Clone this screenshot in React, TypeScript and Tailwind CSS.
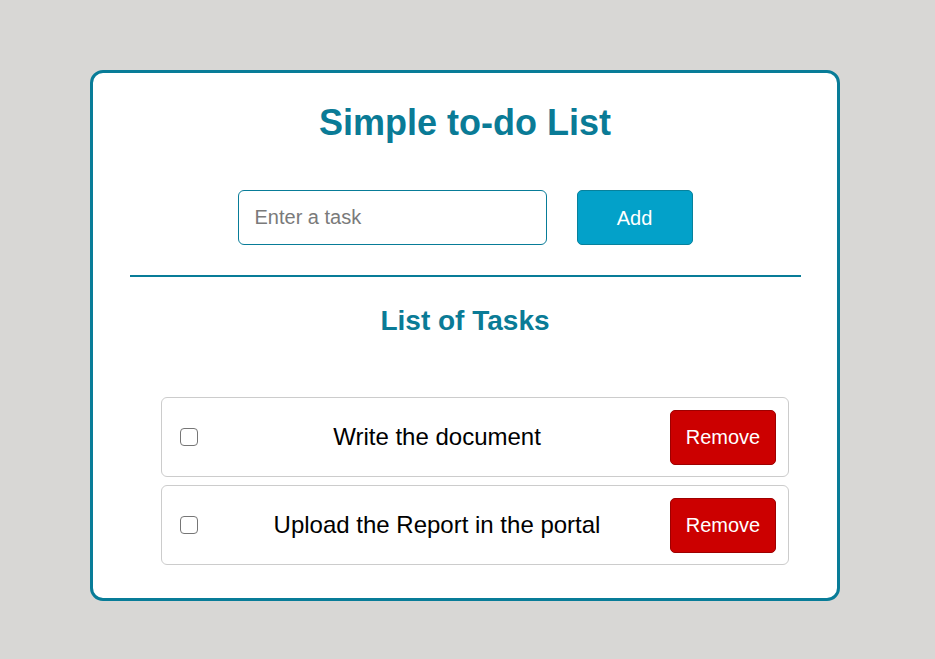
import { useState } from "react";

type Task = { id: number; text: string; done: boolean };

const initialTasks: Task[] = [
  { id: 1, text: "Write the document", done: false },
  { id: 2, text: "Upload the Report in the portal", done: false },
];

export default function App() {
  const [tasks, setTasks] = useState<Task[]>(initialTasks);
  const [draft, setDraft] = useState("");

  const addTask = () => {
    if (!draft.trim()) return;
    setTasks((t) => [...t, { id: Date.now(), text: draft.trim(), done: false }]);
    setDraft("");
  };

  return (
    <div
      className="min-h-[659px] w-full bg-[#d8d7d5] pt-[70px] pb-[59px]"
      style={{ fontFamily: '"Liberation Sans", Arial, sans-serif' }}
    >
      <div className="ml-[90px] w-[750px] rounded-[13px] border-[3px] border-[#087c98] bg-white pt-[29px] pb-[33px]">
        <h1 className="text-center text-[36px] font-bold leading-[41px] text-[#0a7b96]">
          Simple to-do List
        </h1>

        <div className="mt-[47px] flex justify-center gap-[30px]">
          <input
            value={draft}
            onChange={(e) => setDraft(e.target.value)}
            placeholder="Enter a task"
            className="h-[55px] w-[309px] rounded-[6px] border border-[#087c98] px-[16px] text-[20px] text-black outline-none placeholder:text-[#7a7a7a]"
          />
          <button
            onClick={addTask}
            className="h-[55px] w-[116px] rounded-[5px] border border-[#07819c] bg-[#03a1c9] text-[20px] text-white"
          >
            Add
          </button>
        </div>

        <div className="mx-auto mt-[30px] h-[2px] w-[671px] bg-[#087c98]" />

        <h2 className="mt-[28px] text-center text-[28px] font-bold leading-[32px] text-[#0a7b96]">
          List of Tasks
        </h2>

        <ul className="mt-[60px] ml-[68px] flex w-[628px] flex-col gap-[8px]">
          {tasks.map((task) => (
            <li
              key={task.id}
              className="flex h-[80px] items-center rounded-[6px] border border-[#cccccc] pl-[18px] pr-[12px]"
            >
              <input
                type="checkbox"
                checked={task.done}
                onChange={() =>
                  setTasks((t) => t.map((x) => (x.id === task.id ? { ...x, done: !x.done } : x)))
                }
                className="h-[18px] w-[18px] shrink-0 appearance-none rounded-[4px] border border-[#767676] bg-white checked:bg-[#0075ff]"
              />
              <span
                className={`flex-1 pl-[6px] text-center text-[24px] leading-[28px] text-black ${
                  task.done ? "line-through" : ""
                }`}
              >
                {task.text}
              </span>
              <button
                onClick={() => setTasks((t) => t.filter((x) => x.id !== task.id))}
                className="h-[55px] w-[106px] shrink-0 rounded-[5px] border border-[#9e0000] bg-[#cc0000] text-[20px] text-white"
              >
                Remove
              </button>
            </li>
          ))}
        </ul>
      </div>
    </div>
  );
}
